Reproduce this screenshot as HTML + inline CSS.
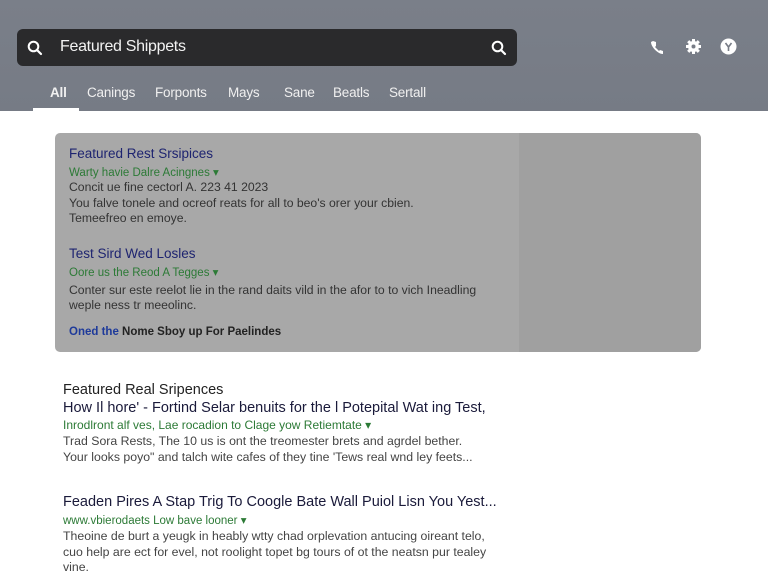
<!DOCTYPE html>
<html><head><meta charset="utf-8"><style>
*{margin:0;padding:0;box-sizing:border-box}
body{width:768px;height:576px;overflow:hidden;background:#fff;font-family:"Liberation Sans",Arial,sans-serif;position:relative}
.hdr{position:absolute;left:0;top:0;width:768px;height:111px;background:linear-gradient(#7a7f89,#767b85)}
.sb{position:absolute;left:17px;top:29px;width:500px;height:37px;background:#2a2a2c;border-radius:6px}
.sb .t{position:absolute;left:43px;top:9px;color:#f2f2f2;font-size:16px;letter-spacing:-0.3px}
.tabs span{position:absolute;top:85px;color:#f0f0f0;font-size:13.5px;letter-spacing:-0.2px}
.ul{position:absolute;left:33px;top:108px;width:46px;height:3px;background:#fff}
.card{position:absolute;left:55px;top:133px;width:646px;height:219px;background:#a8a8a8;border-radius:5px;overflow:hidden}
.card .r{position:absolute;left:464px;top:0;width:182px;height:219px;background:#a0a0a0}
.a{position:absolute;white-space:nowrap}
.bl{color:#1e2470;font-size:13.5px}
.gr{color:#2c7a36;font-size:11.5px}
.tx{color:#333;font-size:12.2px}
.tx2{color:#444;font-size:12.3px}
.t2{font-size:14.5px;color:#1a1a3a}
</style></head><body>
<div class="hdr">
<div class="sb">
<svg style="position:absolute;left:10px;top:11px" width="16" height="16" viewBox="0 0 16 16"><circle cx="6.5" cy="6.5" r="4.8" fill="none" stroke="#fff" stroke-width="2"/><path d="M10 10l4 4" stroke="#fff" stroke-width="2.2" stroke-linecap="round"/></svg>
<div class="t">Featured Shippets</div>
<svg style="position:absolute;left:474px;top:11px" width="16" height="16" viewBox="0 0 16 16"><circle cx="6.5" cy="6.5" r="4.8" fill="none" stroke="#fff" stroke-width="2"/><path d="M10 10l4 4" stroke="#fff" stroke-width="2.2" stroke-linecap="round"/></svg>
</div>
<svg style="position:absolute;left:650px;top:39px" width="16" height="16" viewBox="0 0 16 16"><path d="M3 2l3 1 0 4-1 1 4 4 1-1 3 1 0 3C8 15 1 8 1 3z" fill="#fff"/></svg>
<svg style="position:absolute;left:685px;top:38px" width="17" height="17" viewBox="0 0 17 17"><circle cx="8.5" cy="8.5" r="5.5" fill="#fff"/><g stroke="#fff" stroke-width="3"><path d="M8.5 1v15M1 8.5h15M3.2 3.2l10.6 10.6M13.8 3.2L3.2 13.8"/></g><circle cx="8.5" cy="8.5" r="2" fill="#777c86"/></svg>
<svg style="position:absolute;left:720px;top:38px" width="17" height="17" viewBox="0 0 17 17"><circle cx="8.5" cy="8.5" r="8" fill="#fff"/><path d="M5.5 5l3 4 3-4M8.5 9v4" stroke="#777c86" stroke-width="1.6" fill="none"/></svg>
<div class="tabs"><span style="left:50px;font-weight:bold">All</span><span style="left:87px">Canings</span><span style="left:155px">Forponts</span><span style="left:228px">Mays</span><span style="left:284px">Sane</span><span style="left:333px">Beatls</span><span style="left:389px">Sertall</span></div>
<div class="ul"></div>
</div>
<div class="card"><div class="r"></div>
<div class="a bl" style="left:14px;top:13px">Featured Rest Srsipices</div>
<div class="a gr" style="left:14px;top:32px">Warty havie Dalre Acingnes ▾</div>
<div class="a tx" style="left:14px;top:47px">Concit ue fine cectorl A. 223 41 2023</div>
<div class="a tx" style="left:14px;top:63px">You falve tonele and ocreof reats for all to beo's orer your cbien.</div>
<div class="a tx" style="left:14px;top:78px">Temeefreo en emoye.</div>
<div class="a bl" style="left:14px;top:113px">Test Sird Wed Losles</div>
<div class="a gr" style="left:14px;top:132px">Oore us the Reod A Tegges ▾</div>
<div class="a tx" style="left:14px;top:150px">Conter sur este reelot lie in the rand daits vild in the afor to to vich Ineadling</div>
<div class="a tx" style="left:14px;top:165px">weple ness tr meeolinc.</div>
<div class="a" style="left:14px;top:193px;font-size:11.5px;font-weight:bold;color:#222"><span style="color:#1e3a9a">Oned the</span> Nome Sboy up For Paelindes</div>
</div>
<div class="a" style="left:63px;top:382px;font-size:14.5px;color:#222">Featured Real Sripences</div>
<div class="a t2" style="left:63px;top:400px">How Il hore' - Fortind Selar benuits for the l Potepital Wat ing Test,</div>
<div class="a gr" style="left:63px;top:418px;font-size:12px">Inrodlront alf ves, Lae rocadion to Clage yow Retiemtate ▾</div>
<div class="a tx2" style="left:63px;top:434px">Trad Sora Rests, The 10 us is ont the treomester brets and agrdel bether.</div>
<div class="a tx2" style="left:63px;top:450px">Your looks poyo" and talch wite cafes of they tine 'Tews real wnd ley feets...</div>
<div class="a t2" style="left:63px;top:494px">Feaden Pires A Stap Trig To Coogle Bate Wall Puiol Lisn You Yest...</div>
<div class="a gr" style="left:63px;top:513px">www.vbierodaets Low bave looner ▾</div>
<div class="a tx2" style="left:63px;top:529px">Theoine de burt a yeugk in heably wtty chad orplevation antucing oireant telo,</div>
<div class="a tx2" style="left:63px;top:545px">cuo help are ect for evel, not roolight topet bg tours of ot the neatsn pur tealey</div>
<div class="a tx2" style="left:63px;top:560px">vine.</div>
</body></html>
